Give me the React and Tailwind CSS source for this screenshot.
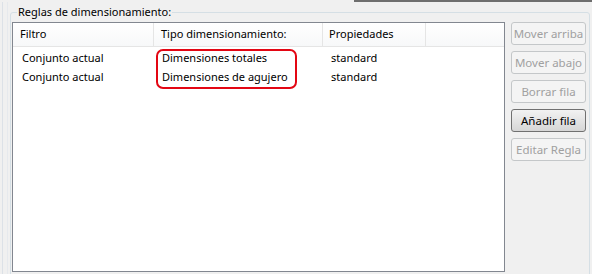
import React from 'react';

const font = { fontFamily: '"Noto Sans", "Open Sans", sans-serif' };

const buttons = [
    { label: 'Mover arriba', enabled: false },
    { label: 'Mover abajo', enabled: false },
    { label: 'Borrar fila', enabled: false },
    { label: 'Añadir fila', enabled: true },
    { label: 'Editar Regla', enabled: false },
];

const rows = [
    ['Conjunto actual', 'Dimensiones totales', 'standard'],
    ['Conjunto actual', 'Dimensiones de agujero', 'standard'],
];

const RuleButton = ({ label, enabled }) => (
    <button
        disabled={!enabled}
        className={
            enabled
                ? 'h-[23px] w-[75px] rounded-[3px] border border-[#707070] bg-gradient-to-b from-[#f2f2f2] to-[#d6d6d6] text-black text-[11.5px] leading-none'
                : 'h-[23px] w-[75px] rounded-[3px] border border-[#c4c7c9] bg-[#f4f4f4] text-[#a0a0a0] text-[11.5px] leading-none'
        }
    >
        {label}
    </button>
);

const App = () => {
    return (
        <div className="w-[592px] h-[274px] bg-[#f0f0f0] flex flex-col overflow-hidden" style={font}>
            <div className="h-[2px] flex shrink-0">
                <div className="w-[354px]" />
                <div className="flex-1 bg-[#6e6e6e]" />
            </div>
            <div className="flex-1 flex ml-[2px] border-l border-[#dce1e7] pl-[4px]">
                <div className="flex-1 flex border-l border-[#e6e9ed] pl-[2px]">
                    <fieldset className="flex-1 mt-[3px] mr-[2px] -mb-[4px] border border-[#d5dfe5] rounded-[3px] pl-px pr-[2px] pb-0 flex gap-[6px] min-w-0">
                        <legend className="ml-[5px] px-[1px] text-[11px] leading-[14px] text-black">Reglas de dimensionamiento:</legend>

                        <div className="relative w-[493px] h-[250px] mt-[3px] border border-[#828790] bg-white">
                            <div className="flex h-[24px] border-b border-[#e5e5e5] bg-gradient-to-b from-white to-[#f7f8f9] text-[11px] text-black">
                                <div className="w-[141px] border-r border-[#e5e5e5] pl-[7px] flex items-center">Filtro</div>
                                <div className="w-[169px] border-r border-[#e5e5e5] pl-[7px] flex items-center">Tipo dimensionamiento:</div>
                                <div className="w-[103px] border-r border-[#e5e5e5] pl-[6px] flex items-center">Propiedades</div>
                                <div className="flex-1" />
                            </div>
                            <div className="pt-[2px] text-[11px] text-black">
                                {rows.map((r, i) => (
                                    <div key={i} className="flex h-[19px] items-center">
                                        <div className="w-[142px] pl-[9px]">{r[0]}</div>
                                        <div className="w-[170px] pl-[7px]">{r[1]}</div>
                                        <div className="w-[103px] pl-[6px]">{r[2]}</div>
                                    </div>
                                ))}
                            </div>
                            {/* highlight annotation */}
                            <div className="absolute left-[143px] top-[26px] w-[141px] h-[40px] border-2 border-[#e30613] rounded-[7px]" />
                        </div>

                        <div className="flex flex-col gap-[6px] mt-[3px]">
                            {buttons.map((b) => (
                                <RuleButton key={b.label} {...b} />
                            ))}
                        </div>
                    </fieldset>
                </div>
            </div>
        </div>
    );
};

export default App;
